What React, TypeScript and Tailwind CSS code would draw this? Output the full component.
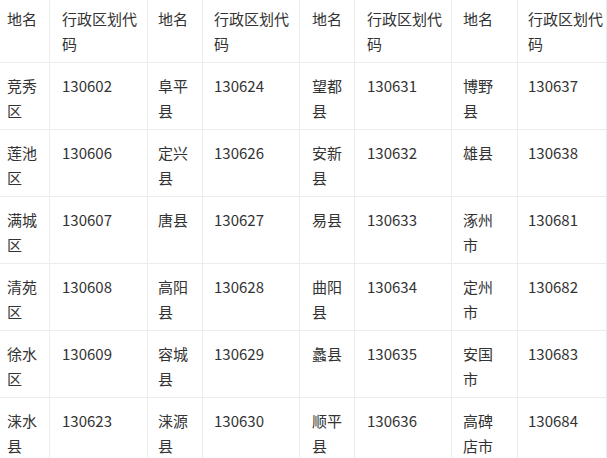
const ROWS: string[][] = [
  ["竞秀区", "130602", "阜平县", "130624", "望都县", "130631", "博野县", "130637"],
  ["莲池区", "130606", "定兴县", "130626", "安新县", "130632", "雄县", "130638"],
  ["满城区", "130607", "唐县", "130627", "易县", "130633", "涿州市", "130681"],
  ["清苑区", "130608", "高阳县", "130628", "曲阳县", "130634", "定州市", "130682"],
  ["徐水区", "130609", "容城县", "130629", "蠡县", "130635", "安国市", "130683"],
  ["涞水县", "130623", "涞源县", "130630", "顺平县", "130636", "高碑店市", "130684"],
];

const HEADER = ["地名", "行政区划代码", "地名", "行政区划代码", "地名", "行政区划代码", "地名", "行政区划代码"];

// per-column padding so the text wraps like the source page
const COL_PAD = [
  "pl-[7px] pr-[8px]",
  "pl-[12px] pr-[5px]",
  "pl-[10px] pr-[9px]",
  "pl-[11px] pr-[5px]",
  "pl-[12px] pr-[8px]",
  "pl-[12px] pr-[4px]",
  "pl-[11px] pr-[11px]",
  "pl-[10px] pr-[1px]",
];

export default function App() {
  return (
    <div
      className="w-[607px] h-[458px] overflow-hidden bg-white text-[15px] leading-[25px] text-[#333333]"
      style={{ fontFamily: '"Noto Sans CJK SC", "Noto Sans", sans-serif' }}
    >
      <div className="grid grid-cols-[50px_98px_55px_97px_55px_97px_66px_89px]">
        {HEADER.map((h, i) => (
          <div
            key={`h${i}`}
            className={`h-[63px] pt-[6px] border-r border-b border-[#ececec] break-all ${COL_PAD[i]}`}
          >
            {h}
          </div>
        ))}
        {ROWS.map((row, r) =>
          row.map((cell, i) => (
            <div
              key={`${r}-${i}`}
              className={`h-[67px] pt-[10px] border-r border-b border-[#ececec] break-all ${COL_PAD[i]}`}
            >
              {cell}
            </div>
          ))
        )}
      </div>
    </div>
  );
}
